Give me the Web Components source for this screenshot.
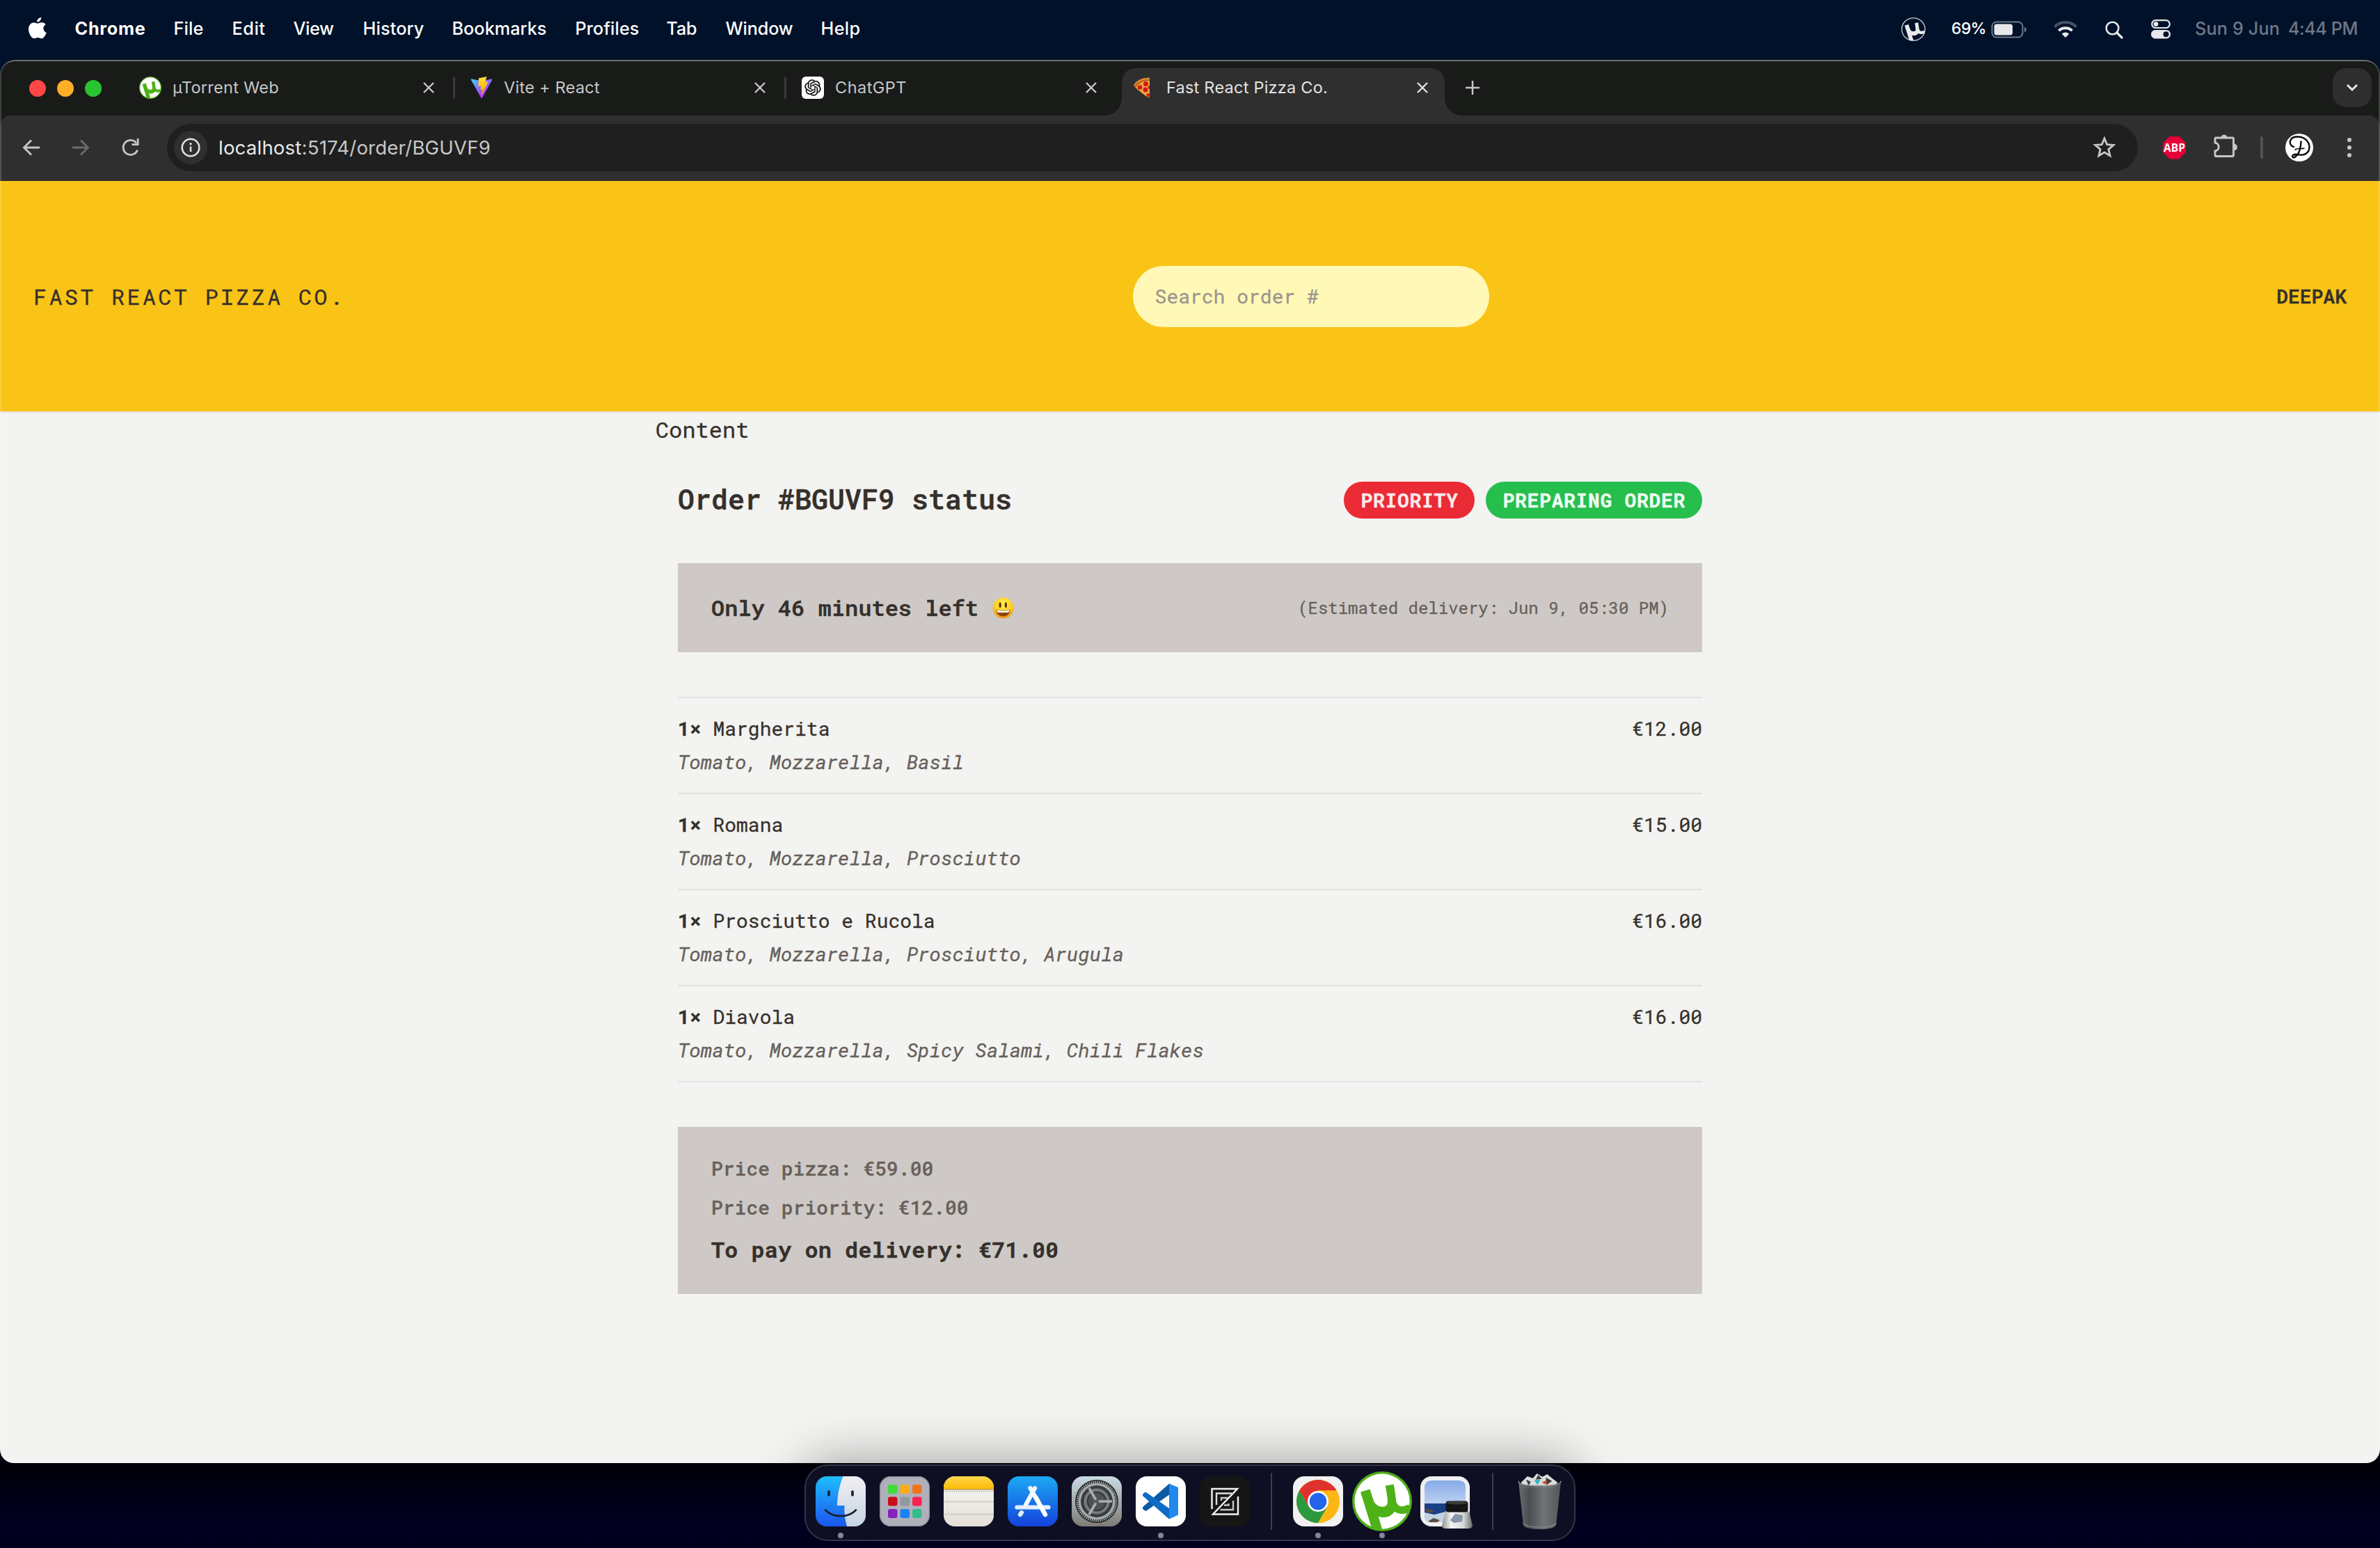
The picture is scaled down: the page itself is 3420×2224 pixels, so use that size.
<!DOCTYPE html>
<html lang="en">
<head>
<meta charset="utf-8">
<title>Fast React Pizza Co.</title>
<style>
html,body{margin:0;padding:0}
body{width:3420px;height:2224px;overflow:hidden;background:#00001e;font-family:Inter,"Liberation Sans",sans-serif}
</style>
</head>
<body>
<desktop-screen></desktop-screen>
<script>
const MONO = '"Roboto Mono","DejaVu Sans Mono","Liberation Mono",monospace';

const define = (name, css, html, setup) => {
  const tpl = document.createElement('template');
  tpl.innerHTML = `<style>*{box-sizing:border-box}${css}</style>${html}`;
  customElements.define(name, class extends HTMLElement {
    connectedCallback() {
      if (this.shadowRoot) return;
      this.attachShadow({mode: 'open'}).append(tpl.content.cloneNode(true));
      if (setup) setup(this, this.shadowRoot);
    }
  });
};

/* ---------- icons ---------- */
const ICONS = {
  apple: ['0 0 26 32', '<path fill="#fff" d="M18.2 0c.3 3.6-2.700 7-6 6.900C11.900 3.400 15 .3 18.200 0zM13 9c1.500 0 3-1.500 5.800-1.500 2.500 0 4.700 1.300 5.900 3.100-5 3-4.200 9.900 1.100 12-1.100 3.200-4 8.600-7 8.700-2.100 0-2.900-1.300-5.400-1.300s-3.400 1.300-5.400 1.300C4.500 31.300 0 23.700 0 17.500 0 11 4 7.700 7.800 7.700 10.300 7.700 12 9 13 9z"/>'],
  muGreen: ['0 0 64 64', '<circle cx="32" cy="32" r="32" fill="#4eae18"/><circle cx="32" cy="32" r="29.500" fill="#fff"/><clipPath id="c"><circle cx="32" cy="32" r="31"/></clipPath><g clip-path="url(#c)" fill="none" stroke="#4eb117"><path d="M14 20.500 L28 66" stroke-width="10.500"/><path d="M17.500 29 C21 46 42 46 42.500 33 C42.500 29 41 20 40 14.500" stroke-width="9"/><path d="M27 44 C36 47 43 44 44 35 C47 42 54 43 62 39" stroke-width="8"/></g>'],
  muTray: ['0 0 64 64', '<circle cx="32" cy="32" r="30.500" fill="none" stroke="#c9cdd4" stroke-width="2.500"/><clipPath id="c"><circle cx="32" cy="32" r="31"/></clipPath><g clip-path="url(#c)" fill="none" stroke="#e7e9ec"><path d="M14 20.500 L28 66" stroke-width="10.500"/><path d="M17.500 29 C21 46 42 46 42.500 33 C42.500 29 41 20 40 14.500" stroke-width="9"/><path d="M27 44 C36 47 43 44 44 35 C47 42 54 43 62 39" stroke-width="8"/></g>'],
  battery: ['0 0 52 26', '<rect x="1.500" y="1.500" width="44" height="22" rx="6.500" fill="none" stroke="#70798a" stroke-width="2"/><rect x="4.500" y="4.500" width="26.500" height="16" rx="3.500" fill="#e6e8eb"/><path d="M48 8.500q3 1.500 3 4t-3 4z" fill="#70798a"/>'],
  wifi: ['0 0 34 26', '<g fill="none" stroke-width="4"><path stroke="#475265" d="M1.500 9.500a22 22 0 0 1 31 0"/><path stroke="#e6e8eb" d="M7.500 15.200a13.500 13.500 0 0 1 19 0"/></g><path d="M17 25l-5.200-5.300a7.500 7.500 0 0 1 10.400 0z" fill="#e6e8eb"/>'],
  search: ['0 0 26 26', '<circle cx="10.500" cy="10.500" r="8.800" fill="none" stroke="#e6e8eb" stroke-width="2.600"/><path d="M17 17l7 7" stroke="#e6e8eb" stroke-width="3.300" stroke-linecap="round"/>'],
  control: ['0 0 28 28', '<rect x="1.200" y="1.200" width="25.600" height="10.800" rx="5.400" fill="none" stroke="#e6e8eb" stroke-width="2.200"/><circle cx="7" cy="6.600" r="3.400" fill="#e6e8eb"/><rect y="15" width="28" height="12.500" rx="6.200" fill="#e6e8eb"/><circle cx="21.500" cy="21.200" r="4" fill="#001129"/>'],
  close: ['0 0 18 18', '<path d="M2 2l14 14M16 2L2 16" stroke="currentColor" stroke-width="2.400"/>'],
  plus: ['0 0 22 22', '<path d="M11 1v20M1 11h20" stroke="#c7c7c7" stroke-width="2.500"/>'],
  vite: ['0 0 410 404', '<defs><linearGradient id="a" x1="6" y1="33" x2="235" y2="344" gradientUnits="userSpaceOnUse"><stop stop-color="#41D1FF"/><stop offset="1" stop-color="#BD34FE"/></linearGradient><linearGradient id="b" x1="194" y1="9" x2="236" y2="293" gradientUnits="userSpaceOnUse"><stop stop-color="#FFEA83"/><stop offset=".08" stop-color="#FFDD35"/><stop offset="1" stop-color="#FFA800"/></linearGradient></defs><path fill="url(#a)" d="M399.600 59.500L215.600 388.500c-3.800 6.800-13.600 6.900-17.400.1L10.600 59.600C6.400 52.100 12.700 43.100 21.100 44.600L205.200 77.500c1.200.2 2.400.2 3.500 0l180.300-32.900c8.400-1.500 14.900 7.400 10.600 14.900z"/><path fill="url(#b)" d="M293 1.600L156.900 28.200c-2.200.4-3.900 2.300-4 4.600l-8.400 141.400c-.2 3.300 2.900 5.900 6.100 5.200l37.900-8.700c3.500-.8 6.700 2.300 6 5.800l-11.300 55.100c-.8 3.700 2.700 6.900 6.300 5.800l23.400-7.100c3.600-1.100 7.100 2.100 6.300 5.800l-17.900 86.600c-1.100 5.400 6.100 8.400 9.100 3.700l2-3.100 110.900-221.400c1.900-3.700-1.300-7.900-5.400-7.100l-39 7.500c-3.700.7-6.800-2.700-5.800-6.300l25.500-88.200c1-3.600-2.100-7-5.800-6.300z"/>'],
  gpt: ['0 0 32 32', '<rect width="32" height="32" rx="6" fill="#fff"/><path transform="translate(4.300 4.300) scale(.975)" fill="#111" stroke="#111" stroke-width=".25" d="M22.2819 9.8211a5.9847 5.9847 0 0 0-.5157-4.9108 6.0462 6.0462 0 0 0-6.5098-2.9A6.0651 6.0651 0 0 0 4.9807 4.1818a5.9847 5.9847 0 0 0-3.9977 2.9 6.0462 6.0462 0 0 0 .7427 7.0966 5.98 5.98 0 0 0 .511 4.9107 6.051 6.051 0 0 0 6.5146 2.9001A5.9847 5.9847 0 0 0 13.2599 24a6.0557 6.0557 0 0 0 5.7718-4.2058 5.9894 5.9894 0 0 0 3.9977-2.9001 6.0557 6.0557 0 0 0-.7475-7.0729zm-9.022 12.6081a4.4755 4.4755 0 0 1-2.8764-1.0408l.1419-.0804 4.7783-2.7582a.7948.7948 0 0 0 .3927-.6813v-6.7369l2.02 1.1686a.071.071 0 0 1 .038.052v5.5826a4.504 4.504 0 0 1-4.4945 4.4944zm-9.6607-4.1254a4.4708 4.4708 0 0 1-.5346-3.0137l.142.0852 4.783 2.7582a.7712.7712 0 0 0 .7806 0l5.8428-3.3685v2.3324a.0804.0804 0 0 1-.0332.0615L9.74 19.9502a4.4992 4.4992 0 0 1-6.1408-1.6464zM2.3408 7.8956a4.485 4.485 0 0 1 2.3655-1.9728V11.6a.7664.7664 0 0 0 .3879.6765l5.8144 3.3543-2.0201 1.1685a.0757.0757 0 0 1-.071 0l-4.8303-2.7865A4.504 4.504 0 0 1 2.3408 7.8956zm16.5963 3.8558L13.1038 8.364 15.1192 7.2a.0757.0757 0 0 1 .071 0l4.8303 2.7913a4.4944 4.4944 0 0 1-.6765 8.1042v-5.6772a.79.79 0 0 0-.407-.667zm2.0107-3.0231l-.142-.0852-4.7735-2.7818a.7759.7759 0 0 0-.7854 0L9.409 9.2297V6.8974a.0662.0662 0 0 1 .0284-.0615l4.8303-2.7866a4.4992 4.4992 0 0 1 6.6802 4.66zM8.3065 12.863l-2.02-1.1638a.0804.0804 0 0 1-.038-.0567V6.0742a4.4992 4.4992 0 0 1 7.3757-3.4537l-.142.0805L8.704 5.459a.7948.7948 0 0 0-.3927.6813zm1.0976-2.3654l2.602-1.4998 2.6069 1.4998v2.9994l-2.5974 1.4997-2.6067-1.4997Z"/>'],
  pizza: ['0 0 24 30', '<path d="M1 12C4 5 13 1 24 1v28L20 28Q6 18 1 12z" fill="#f0a63c"/><path d="M1 12C4 5 13 0 24 .5V5C15 5 7 9 4 15z" fill="#b5651d"/><path d="M2.500 11C6 5 14 2 24 2" fill="none" stroke="#e29a45" stroke-width="1.500"/><g fill="#d01919"><circle cx="18.500" cy="9.500" r="3.500"/><circle cx="10" cy="14.500" r="3.300"/><circle cx="18" cy="18" r="3.400"/><path d="M24 12v5a2.500 2.500 0 0 1 0-5z"/><circle cx="22" cy="25.500" r="2.500"/></g>'],
  chevron: ['0 0 18 12', '<path d="M2 2l7 7 7-7" fill="none" stroke="#e3e3e3" stroke-width="3"/>'],
  back: ['0 0 26 24', '<path d="M25 12H3M13 1.500L2.500 12 13 22.500" fill="none" stroke="currentColor" stroke-width="2.800"/>'],
  forward: ['0 0 26 24', '<path d="M1 12h22M13 1.500L23.500 12 13 22.500" fill="none" stroke="currentColor" stroke-width="2.800"/>'],
  reload: ['0 0 26 26', '<path d="M22.500 16.500A10.500 10.500 0 1 1 21 6.500" fill="none" stroke="#c7c7c7" stroke-width="2.800"/><path d="M24.500 0v10h-10v-2.800h7.200V0z" fill="#c7c7c7"/>'],
  info: ['0 0 48 48', '<circle cx="24" cy="24" r="24" fill="#2f2f2f"/><circle cx="24" cy="24" r="12.300" fill="none" stroke="#e0e0e0" stroke-width="2.600"/><path d="M24 22.500v7.500" stroke="#e0e0e0" stroke-width="2.600"/><circle cx="24" cy="18.700" r="1.700" fill="#e0e0e0"/>'],
  star: ['0 0 34 32', '<path d="M17 3.800l3.700 8.800 9.400.8-7.200 6.200 2.200 9.200L17 23.900l-8.100 4.900 2.200-9.200-7.200-6.200 9.400-.8z" fill="none" stroke="#c7c7c7" stroke-width="2.800"/>'],
  puzzle: ['0 0 34 34', '<path d="M4 5h23.500a1 1 0 0 1 1 1v24.500a1 1 0 0 1-1 1H3a1 1 0 0 1-1-1V24c7-1 7-11 0-12V6a1 1 0 0 1 1-1z" fill="none" stroke="#c7c7c7" stroke-width="2.900"/><path d="M10.500 5a4.500 4.500 0 0 1 9 0zM29 13.500a5 5 0 0 1 0 10z" fill="#c7c7c7"/>'],
  avatar: ['0 0 40 40', '<circle cx="20" cy="20" r="20" fill="#fff"/><g fill="none" stroke="#0a0a0a" stroke-linecap="round"><path stroke-width="2.400" d="M12 19C4 16 5 5 16 4.500c12-.5 18.500 7 18.500 15 0 7-6 12-13 11-5-.7-9-1.500-11 1-1.500 2 1 4 3.500 2 6-4 8-11 8.500-22"/><path stroke-width="1.600" d="M14 23c4-3 8-.5 13-2"/></g>'],
  dots: ['0 0 8 28', '<g fill="#c7c7c7"><circle cx="4" cy="3" r="3"/><circle cx="4" cy="14" r="3"/><circle cx="4" cy="25" r="3"/></g>'],
  grin: ['0 0 32 32', '<defs><radialGradient id="g" cx=".5" cy=".3" r=".75"><stop offset="0" stop-color="#fff04a"/><stop offset=".6" stop-color="#ffca28"/><stop offset="1" stop-color="#ee8010"/></radialGradient></defs><circle cx="16" cy="16" r="15.500" fill="url(#g)"/><ellipse cx="11.500" cy="11.500" rx="1.700" ry="4" fill="#5b3410"/><ellipse cx="20" cy="11.500" rx="1.700" ry="4" fill="#5b3410"/><path d="M5.500 18.500q10.500 2 21 0Q25.500 28.500 16 28.500T5.500 18.500z" fill="#8a4a08"/><path d="M6.500 19.200q9.500 1.800 19 0-.2 2.600-2 3.400H8.500q-1.700-.8-2-3.400z" fill="#fff"/>'],
  finder: ['0 0 72 72', '<defs><linearGradient id="a" x2="0" y2="1"><stop stop-color="#1fbdfc"/><stop offset="1" stop-color="#1b55ee"/></linearGradient><linearGradient id="b" x2="0" y2="1"><stop stop-color="#f1f0f2"/><stop offset="1" stop-color="#c5d3e2"/></linearGradient><clipPath id="c"><rect width="72" height="72" rx="16"/></clipPath></defs><g clip-path="url(#c)"><rect width="72" height="72" fill="url(#a)"/><path d="M39.500 0C34 14 31 28 31 42h10.500c-.5 10 .5 20 3.500 30h27V0z" fill="url(#b)"/></g><path d="M19 22v5M53 22v5" stroke="#16202c" stroke-width="3.600" stroke-linecap="round"/><path d="M14 48.500c11 11.500 33 11.500 44 0" fill="none" stroke="#16202c" stroke-width="2.600" stroke-linecap="round"/>'],
  launchpad: ['0 0 72 72', '<rect width="72" height="72" rx="16" fill="#b0b0ba"/><rect x=".7" y=".7" width="70.600" height="70.600" rx="15.500" fill="none" stroke="#8e8e9a" stroke-width="1.200"/><g><rect x="12" y="12" width="13.500" height="13" rx="3" fill="#3fdc38"/><rect x="29.500" y="12" width="13.500" height="13" rx="3" fill="#fcad18"/><rect x="47" y="12" width="13.500" height="13" rx="3" fill="#f17318"/><rect x="12" y="29.500" width="13.500" height="13" rx="3" fill="#c90d16"/><rect x="29.500" y="29.500" width="13.500" height="13" rx="3" fill="#8f999e"/><rect x="47" y="29.500" width="13.500" height="13" rx="3" fill="#fb2350"/><rect x="12" y="47" width="13.500" height="13" rx="3" fill="#8622bd"/><rect x="29.500" y="47" width="13.500" height="13" rx="3" fill="#1a83f4"/><rect x="47" y="47" width="13.500" height="13" rx="3" fill="#34bd8c"/></g>'],
  notes: ['0 0 72 72', '<defs><linearGradient id="a" x2="0" y2="1"><stop stop-color="#f8f7f5"/><stop offset="1" stop-color="#e4dfd6"/></linearGradient><linearGradient id="b" x2="0" y2="1"><stop stop-color="#ffd84c"/><stop offset="1" stop-color="#fcb905"/></linearGradient><clipPath id="c"><rect width="72" height="72" rx="16"/></clipPath></defs><g clip-path="url(#c)"><rect width="72" height="72" fill="url(#a)"/><rect width="72" height="18.500" fill="url(#b)"/><path d="M0 19h72" stroke="#b49a55" stroke-width="1.400"/><path d="M0 22h72" stroke="#bbb8b3" stroke-width="2" stroke-dasharray="1.200 1.800"/><path d="M0 36.500h72M0 54.500h72" stroke="#cfcdca" stroke-width="1.800"/></g>'],
  appstore: ['0 0 72 72', '<defs><linearGradient id="a" x2="0" y2="1"><stop stop-color="#1da9f4"/><stop offset="1" stop-color="#1442da"/></linearGradient></defs><rect width="72" height="72" rx="16" fill="url(#a)"/><g stroke-linecap="round" stroke-width="6.200"><path d="M39 17L26 41M32.500 17L54 55" stroke="#f2f8ff"/><path d="M13.500 44.500h45" stroke="#e4eefc"/><path d="M20 52l-2 3" stroke="#e4eefc"/><path d="M40.500 30L54 55" stroke="#fff"/></g>'],
  settings: ['0 0 72 72', '<defs><linearGradient id="a" x2="0" y2="1"><stop stop-color="#c9dbe4"/><stop offset="1" stop-color="#7f7b76"/></linearGradient></defs><rect width="72" height="72" rx="16" fill="url(#a)"/><circle cx="36" cy="36" r="31" fill="#232526"/><circle cx="36" cy="36" r="27.500" fill="none" stroke="#a5acae" stroke-width="4" stroke-dasharray="1.500 1.380"/><circle cx="36" cy="36" r="24.500" fill="none" stroke="#a3abad" stroke-width="3.500"/><circle cx="36" cy="36" r="22.500" fill="#3a3c3d"/><circle cx="36" cy="36" r="16.500" fill="none" stroke="#777d7e" stroke-width="4"/><circle cx="36" cy="36" r="12" fill="#4f5253"/><path d="M36 36h22M36 36L25 17M36 36L25 55" stroke="#a8afb1" stroke-width="3.600"/><circle cx="36" cy="36" r="3" fill="#595c5d"/>'],
  vscode: ['0 0 72 72', '<rect width="72" height="72" rx="16" fill="#fff"/><path d="M48.500 10.500L10 44.500v2l4.500 3.500L48.500 26z" fill="#0b559d"/><path d="M10.500 44L48.500 10.500V26L15 49.500q-2 .5-5-3.500z" fill="#0b5aa5"/><path d="M15 23q-2-1-5 3v2l38 33.500V46z" fill="#0f6cc5"/><path d="M48 10.500l13 5.500v39.500L48 61.500z" fill="#2188ee"/>'],
  zed: ['0 0 72 72', '<rect width="72" height="72" rx="16" fill="#161616"/><g fill="none" stroke="#f2f2f2" stroke-width="2.400"><path d="M17.500 47V18H54L19 54.500H55V29"/><path d="M24 41V24.500H46" opacity=".9"/><path d="M31 35V31H40M29.500 48H48V35" opacity=".8"/><path d="M35 41.500H41.500V39" opacity=".8"/></g>'],
  chrome: ['0 0 72 72', '<rect width="72" height="72" rx="16" fill="#f1f1f1"/><g transform="translate(36 36)"><circle r="31" fill="#fdb714"/><path d="M0-15.500H26.800A31 31 0 0 0-26.800-15.500L-13.400 7.700z" fill="#e0322c"/><path d="M-26.800-15.500A31 31 0 0 0 0 31L13.400 7.700-13.400 7.700z" fill="#2c9941"/><path d="M0 31A31 31 0 0 0 26.800-15.500H0L13.400 7.700z" fill="#fdb714"/><circle r="15" fill="#fff"/><circle r="12.300" fill="#2265ea"/></g>'],
  preview: ['0 0 76 76', '<defs><linearGradient id="a" x2="0" y2="1"><stop stop-color="#86aae8"/><stop offset="1" stop-color="#bcd0f2"/></linearGradient><linearGradient id="b" x2="1" y2="0"><stop stop-color="#8e8e8e"/><stop offset=".3" stop-color="#f4f4f4"/><stop offset=".7" stop-color="#d5d8da"/><stop offset="1" stop-color="#6a6a6a"/></linearGradient></defs><rect width="71" height="72" rx="16" fill="#f0f0f0"/><path d="M6 39V16Q6 6 16 6h39q10 0 10 10v23z" fill="url(#a)"/><path d="M6 39h59v27H16Q6 66 6 56z" fill="#1b3f87"/><path d="M6 52l14 3 16-4v15H16Q6 66 6 58z" fill="#c2d2e2"/><path d="M6 47l8 0 6 4-10 2zM12 64l7-4 9 3-4 3H14z" fill="#5a4b3c"/><path d="M36 50h34l5 21q-1 4-6 4H36q-5 0-5-4z" fill="url(#b)"/><path d="M43 63l7-9 11 2-1 9-12 2z" fill="#8795a5"/><rect x="36.500" y="35.500" width="32" height="16" rx="4" fill="#151515"/><ellipse cx="52.500" cy="38" rx="15" ry="2.500" fill="#3a3a3a"/>'],
  trash: ['0 0 64 84', '<defs><linearGradient id="a" x2="1" y2="0"><stop stop-color="#6f7375"/><stop offset=".25" stop-color="#4d5153"/><stop offset=".6" stop-color="#74787a"/><stop offset="1" stop-color="#55595b"/></linearGradient></defs><path d="M5 14L14 5l8 3 6-7 8 5 7-4 7 6 8 6-6 9H8z" fill="#dcdcdc"/><path d="M12 10l7 3-3 6zM30 3l5 6-9 1zM41 7l9 5-8 6z" fill="#3b3b40"/><path d="M24 11l9-1-4 8z" fill="#28b4c8"/><path d="M35 14l7-3 1 7z" fill="#b7502e"/><path d="M1 12q0 7 31 7t31-7L56 76q-2 7-24 7T8 76z" fill="url(#a)" opacity=".96"/><path d="M1 12q0 7 31 7t31-7" fill="none" stroke="#909496" stroke-width="1.500"/><path d="M8 74q4 6 24 6t24-6" fill="none" stroke="#8c9092" stroke-width="1.500" opacity=".7"/>']
};
define('ui-icon', ':host{display:block;flex:none}svg{display:block;width:100%;height:100%;overflow:visible}', '<svg></svg>', (el, root) => {
  const [box, body] = ICONS[el.getAttribute('name')];
  const svg = root.querySelector('svg');
  svg.setAttribute('viewBox', box);
  svg.setAttribute('preserveAspectRatio', 'none');
  svg.innerHTML = body;
  const [, , w, h] = box.split(' ');
  el.style.width = (el.getAttribute('w') || w) + 'px';
  el.style.height = (el.getAttribute('h') || h) + 'px';
});

/* Label that tracks its letters so that the line fills the given width. */
define('fit-text', ':host{display:block;flex:none;white-space:pre;line-height:1.2}span{display:inline-block}', '<span><slot></slot></span>', (el, root) => {
  const span = root.querySelector('span');
  const want = +el.getAttribute('w');
  if (want) {
    const got = span.getBoundingClientRect().width;
    span.style.letterSpacing = ((want - got) / el.textContent.length) + 'px';
  }
  if (el.hasAttribute('box')) el.style.width = el.getAttribute('box') + 'px';
});

/* ---------- menu bar ---------- */
define('menu-bar', `:host{display:flex;height:86px;background:#001129;align-items:flex-start;color:#fff;font-size:25.200px;font-weight:500;justify-content:space-between}
.l,.r{display:flex}.l{padding:25px 0 0 41px}.l fit-text{margin-top:1px}.l ui-icon+fit-text{margin-left:40.500px}.r{padding-top:25px;width:688px}
.d{color:#6e7887;font-weight:500;margin-top:1px}`,
`<div class="l"><ui-icon name="apple" w="26" h="31"></ui-icon>
<fit-text w="102" box="142" style="font-weight:700">Chrome</fit-text><fit-text w="43" box="84">File</fit-text><fit-text w="48" box="88">Edit</fit-text><fit-text w="58" box="100">View</fit-text><fit-text w="88" box="128">History</fit-text><fit-text w="136" box="177">Bookmarks</fit-text><fit-text w="92" box="131">Profiles</fit-text><fit-text w="44" box="85">Tab</fit-text><fit-text w="97" box="137">Window</fit-text><fit-text w="57">Help</fit-text></div>
<div class="r"><ui-icon name="muTray" w="35" h="34"></ui-icon><fit-text w="50" box="57" style="margin:3px 0 0 37px;font-size:23px">69%</fit-text><ui-icon name="battery" style="margin:5px 0 0 0"></ui-icon><ui-icon name="wifi" style="margin:4px 0 0 38px"></ui-icon><ui-icon name="search" style="margin:5px 0 0 40px"></ui-icon><ui-icon name="control" style="margin:3px 0 0 40px"></ui-icon><fit-text class="d" w="122" box="134" style="margin-left:35px">Sun 9 Jun</fit-text><fit-text class="d" w="100">4:44 PM</fit-text></div>`);

/* ---------- browser chrome ---------- */
define('browser-tab', `:host{display:flex;height:68px;align-items:center;flex:none;color:#c7c7c7;font-size:23.500px;width:476px;padding-left:22px;position:relative}
:host([active]){background:#2f2f2f;color:#e3e3e3;width:464px;border-radius:20px 20px 0 0;padding-left:16px}
:host([active])::before,:host([active])::after{content:"";position:absolute;bottom:0;width:24px;height:24px}
:host([active])::before{left:-24px;background:radial-gradient(circle at 0 0,transparent 23.500px,#2f2f2f 24px)}
:host([active])::after{right:-24px;background:radial-gradient(circle at 100% 0,transparent 23.500px,#2f2f2f 24px)}
.bar{width:3px;height:32px;background:#3a3b3a;border-radius:2px;margin-left:26px}:host([active]) .bar,:host([last]) .bar{display:none}
.t{flex:none;padding-left:16px}:host([active]) .t{padding-left:24px}.x,.t,.bar{margin-bottom:12px}.x{margin-left:auto}`,
`<slot name="icon"></slot><div class="t"><slot></slot></div><ui-icon class="x" name="close"></ui-icon><div class="bar"></div>`, (el, root) => {
  root.querySelector('.x').style.marginRight = el.hasAttribute('active') ? '23px' : el.hasAttribute('last') ? '35px' : '0';
});
define('tab-strip', `:host{display:flex;height:78px;background:#191b19;padding:10px 12px 0 42px}
.lights{display:flex;gap:16px;padding-top:17px;width:136px;flex:none}.lights i{width:24px;height:24px;border-radius:50%}
ui-icon[slot]{margin-bottom:12px}.plus{margin:17px 0 0 29px}.menu{margin-left:auto;width:56px;height:56px;border-radius:20px;background:#2e2e2e;display:flex;align-items:center;justify-content:center}`,
`<div class="lights"><i style="background:#ff4746"></i><i style="background:#ffae27"></i><i style="background:#28c533"></i></div>
<browser-tab><ui-icon slot="icon" name="muGreen" w="32" h="32"></ui-icon><fit-text w="153">µTorrent Web</fit-text></browser-tab>
<browser-tab><ui-icon slot="icon" name="vite" w="32" h="32"></ui-icon><fit-text w="138">Vite + React</fit-text></browser-tab>
<browser-tab last style="width:482px"><ui-icon slot="icon" name="gpt" w="32" h="32"></ui-icon><fit-text w="103">ChatGPT</fit-text></browser-tab>
<browser-tab active><ui-icon slot="icon" name="pizza" w="24" h="30"></ui-icon><fit-text w="232">Fast React Pizza Co.</fit-text></browser-tab>
<ui-icon class="plus" name="plus"></ui-icon><div class="menu"><ui-icon name="chevron"></ui-icon></div>`);

define('tool-bar', `:host{display:flex;height:94px;background:#2f2f2f;border-radius:16px 16px 0 0;align-items:center;padding:0 40px 2px 32px;color:#c7c7c7}
.omni{display:flex;align-items:center;height:68px;width:2832px;border-radius:34px;background:#1f1f1f;margin-left:39px;padding:0 31px 0 10px;font-size:27.500px}
em{font-style:normal;color:#e8e8e8}.star{margin:-2px 0 0 auto}
.abp{width:33px;height:33px;margin-left:36px;background:#e50035;clip-path:polygon(30% 0,70% 0,100% 30%,100% 70%,70% 100%,30% 100%,0 70%,0 30%);color:#fff;font-family:"Open Sans",sans-serif;font-weight:700;font-size:15.500px;display:flex;align-items:center;justify-content:center}
.bar{width:4px;height:32px;border-radius:2px;background:#525252;margin-left:33px}`,
`<ui-icon name="back"></ui-icon><ui-icon name="forward" style="color:#6b6b6b;margin-left:45px"></ui-icon><ui-icon name="reload" style="margin-left:46px"></ui-icon>
<div class="omni"><ui-icon name="info"></ui-icon><fit-text w="391" style="margin-left:16px"><em>localhost</em>:5174/order/BGUVF9</fit-text><ui-icon class="star" name="star"></ui-icon></div>
<div class="abp">ABP</div><ui-icon name="puzzle" style="margin:-4px 0 0 40px"></ui-icon><div class="bar"></div><ui-icon name="avatar" style="margin-left:32px"></ui-icon><ui-icon name="dots" style="margin-left:auto"></ui-icon>`);

/* ---------- pizza app ---------- */
define('mono-text', `:host{display:block;white-space:pre;flex:none;font-family:${MONO};font-size:var(--s);line-height:var(--lh);letter-spacing:calc(var(--s)*var(--track,0));-webkit-text-stroke:.3px currentColor}
div{transform:translateY(var(--dy))}`, '<div><slot></slot></div>', el => {
  const s = +(el.getAttribute('size') || 28);
  el.style.setProperty('--s', s + 'px');
  el.style.setProperty('--lh', (s === 32 ? 48 : s === 40 ? 56 : s === 24 ? 32 : 40) + 'px');
  el.style.setProperty('--dy', (el.getAttribute('dy') || 0) + 'px');
  if (el.hasAttribute('track')) el.style.setProperty('--track', el.getAttribute('track'));
});
define('app-header', `:host{display:flex;height:333px;background:#f9c416;border-bottom:2px solid #e4e1dc;align-items:center;justify-content:space-between;padding:0 48px;color:#35302b}
.search{width:512px;height:88px;border-radius:44px;background:#fff8b6;display:flex;align-items:center;padding-left:32px;color:#9c948f}`,
`<mono-text size="32" track=".1">FAST REACT PIZZA CO.</mono-text><div class="search"><mono-text>Search order #</mono-text></div><mono-text style="font-weight:600">DEEPAK</mono-text>`);
define('status-badge', `:host{display:flex;align-items:center;height:53px;border-radius:27px;padding:0 24px;font-weight:700;background:var(--bg)}`, `<mono-text track=".025" dy="1"><slot></slot></mono-text>`);
define('order-item', `:host{display:flex;flex-direction:column;gap:8px;padding:24px 0;height:136px}:host(:not(:first-of-type)){border-top:2px solid #e2dfde;height:138px}
.row{display:flex;justify-content:space-between}.ing{font-style:italic;color:#67605a}b{font-weight:700}`,
`<div class="row"><mono-text><b>1×</b> <slot></slot></mono-text><mono-text><slot name="price"></slot></mono-text></div><mono-text class="ing"><slot name="ing"></slot></mono-text>`);
define('order-page', `:host{display:flex;flex-direction:column;width:1536px;margin:0 auto;color:#35302b}
.body{padding:48px 32px 0;display:flex;flex-direction:column}
.head{display:flex;justify-content:space-between;align-items:center;height:56px}.badges{display:flex;gap:16px;padding-top:2px}
.eta{margin-top:64px;height:128px;background:#cec9c6;display:flex;align-items:center;justify-content:space-between;padding:0 48px}
.left{display:flex;align-items:center;font-weight:600}
.list{margin-top:64px;border-top:2px solid #dfe3e8;border-bottom:2px solid #dfe3e8;display:flex;flex-direction:column}
.sum{margin-top:64px;height:240px;background:#cec9c6;display:flex;flex-direction:column;gap:16px;padding:40px 48px;color:#67605a}`,
`<mono-text size="32">Content</mono-text><div class="body">
<div class="head"><mono-text size="40" style="font-weight:650">Order #BGUVF9 status</mono-text><div class="badges"><status-badge style="--bg:#ea2b36;color:#feeaea">PRIORITY</status-badge><status-badge style="--bg:#26bf4d;color:#effdf3">PREPARING ORDER</status-badge></div></div>
<div class="eta"><div class="left"><mono-text size="32">Only 46 minutes left </mono-text><ui-icon name="grin" w="31" h="31" style="margin-left:1px"></ui-icon></div><mono-text size="24" style="color:#67605a">(Estimated delivery: Jun 9, 05:30 PM)</mono-text></div>
<div class="list">
<order-item>Margherita<span slot="price">€12.00</span><span slot="ing">Tomato, Mozzarella, Basil</span></order-item>
<order-item>Romana<span slot="price">€15.00</span><span slot="ing">Tomato, Mozzarella, Prosciutto</span></order-item>
<order-item>Prosciutto e Rucola<span slot="price">€16.00</span><span slot="ing">Tomato, Mozzarella, Prosciutto, Arugula</span></order-item>
<order-item>Diavola<span slot="price">€16.00</span><span slot="ing">Tomato, Mozzarella, Spicy Salami, Chili Flakes</span></order-item>
</div>
<div class="sum"><mono-text style="font-weight:550">Price pizza: €59.00</mono-text><mono-text style="font-weight:550">Price priority: €12.00</mono-text><mono-text size="32" style="font-weight:700;color:#35302b">To pay on delivery: €71.00</mono-text></div>
</div>`);

define('browser-window', `:host{display:block;height:2016px;border-radius:22px 22px 20px 20px;overflow:hidden;background:#f3f3f1;border-top:2px solid #6d6f6d;position:relative}
:host::after{content:"";position:absolute;inset:0;border:solid rgba(255,255,255,.17);border-width:0 2px;border-radius:20px}
.top{background:#191b19}.shade{position:absolute;left:1166px;right:1166px;bottom:-70px;height:60px;border-radius:40px;box-shadow:0 0 70px 16px rgba(0,0,0,.32)}`,
`<div class="top"><tab-strip></tab-strip><tool-bar></tool-bar></div><app-header></app-header><order-page></order-page><div class="shade"></div>`);

/* ---------- dock ---------- */
define('dock-app', `:host{display:flex;flex-direction:column;align-items:center;justify-content:center;width:92px;height:100%;position:relative}
:host([running])::after{content:"";position:absolute;bottom:-2px;left:42px;width:8px;height:8px;border-radius:50%;background:#8484a2}`,
'<slot></slot>');
define('app-dock', `:host{display:flex;width:1108px;height:110px;margin:2px auto 0;border:2px solid #343449;border-radius:34px;background:#0f0f24;padding:0 0 4px 4px}
i{width:42px;flex:none;display:flex;justify-content:center;align-items:center}i::after{content:"";width:2px;height:82px;background:#3c3c52}`,
`<dock-app running><ui-icon name="finder"></ui-icon></dock-app><dock-app><ui-icon name="launchpad"></ui-icon></dock-app><dock-app><ui-icon name="notes"></ui-icon></dock-app><dock-app><ui-icon name="appstore"></ui-icon></dock-app><dock-app><ui-icon name="settings"></ui-icon></dock-app><dock-app running><ui-icon name="vscode"></ui-icon></dock-app><dock-app><ui-icon name="zed"></ui-icon></dock-app><i></i><dock-app running><ui-icon name="chrome"></ui-icon></dock-app><dock-app running><ui-icon name="muGreen" w="86" h="86"></ui-icon></dock-app><dock-app><ui-icon name="preview" w="76" h="76" style="margin:4px 0 0 2px"></ui-icon></dock-app><i></i><dock-app><ui-icon name="trash" w="63" h="82"></ui-icon></dock-app>`);

define('desktop-screen', `:host{display:flex;flex-direction:column;width:3420px;height:2224px;background:linear-gradient(#001129 0,#001129 2000px,#000008 2104px,#00001f 2180px,#00001e)}`,
`<menu-bar></menu-bar><browser-window></browser-window><app-dock></app-dock>`);
</script>
</body>
</html>
